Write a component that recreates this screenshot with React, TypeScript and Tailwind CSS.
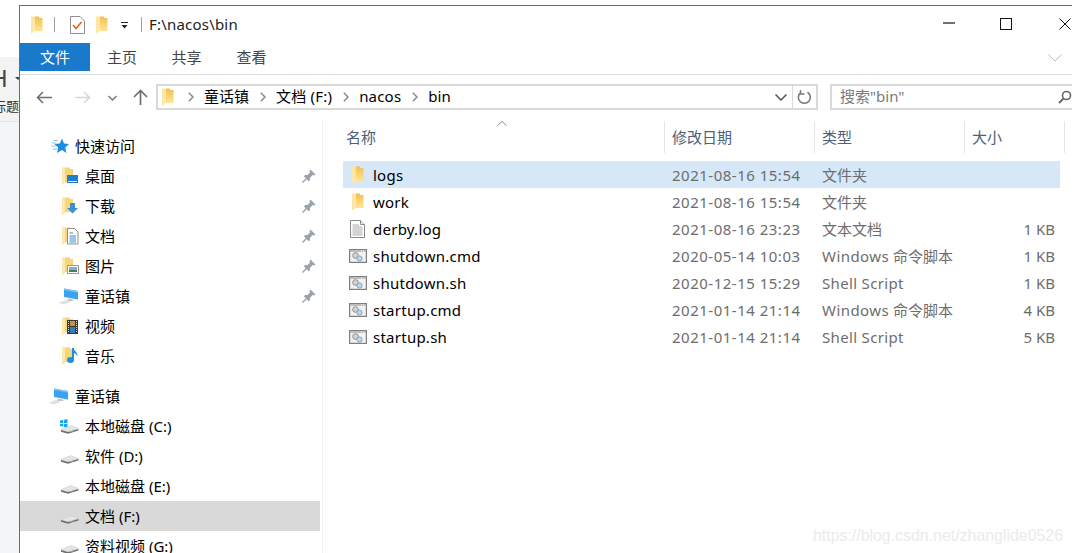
import type { ReactNode } from "react";

const uiFont = "font-['Noto_Sans','Noto_Sans_CJK_SC',sans-serif]";

function Folder({ className = "" }: { className?: string }) {
  return (
    <svg width="12" height="18" viewBox="0 0 12 18" className={className}>
      <defs>
        <linearGradient id="folderBody" x1="0" y1="0" x2="0" y2="1">
          <stop offset="0" stopColor="#f1c04f" />
          <stop offset="1" stopColor="#ffe595" />
        </linearGradient>
      </defs>
      <path d="M3.5 0.5 H8 V2 H11.5 V15 H3.5 Z" fill="url(#folderBody)" />
      <path d="M0 0.5 L3.5 0.5 V15 L0.6 17.5 H0 Z" fill="#fde6a6" />
    </svg>
  );
}

function Pin() {
  return (
    <svg width="14" height="14" viewBox="0 0 14 14">
      <path d="M8.5 0.5 L13.5 5.5 L12 6.5 L10.5 6 L8 9 L8 11.5 L6.5 12 L2 7.5 L3 6 L5.5 6 L8 3.5 L7.5 2 Z" fill="#9aa3ab" />
      <path d="M4.5 9.5 L0.5 13.5" stroke="#9aa3ab" strokeWidth="1.4" />
    </svg>
  );
}

function NavFolder({ children }: { children: ReactNode }) {
  return (
    <svg width="17" height="18" viewBox="0 0 17 18">
      <path d="M0 0.5 H8 V2 H11 V15 H3.5 L0.6 17.5 H0 Z" fill="#f8d675" />
      <path d="M0 0.5 L3 0.5 V15 L0.6 17.5 H0 Z" fill="#fde9ae" />
      {children}
    </svg>
  );
}

function DesktopIcon() {
  return (
    <NavFolder>
      <rect x="5" y="8" width="11" height="8" fill="#1a7fd0" />
      <rect x="6" y="14" width="9" height="1" fill="#d9ecfa" />
    </NavFolder>
  );
}
function DownloadIcon() {
  return (
    <NavFolder>
      <path d="M8 6 H13 V11 H16 L10.5 16.5 L5 11 H8 Z" fill="#3f8fd6" />
    </NavFolder>
  );
}
function DocsIcon() {
  return (
    <NavFolder>
      <path d="M5.5 1.5 H12.5 L16 5 V17 H5.5 Z" fill="#fff" stroke="#8d8d8d" />
      <path d="M7.5 6 H11 M7.5 9 H14 M7.5 11 H14 M7.5 13 H14 M7.5 15 H14" stroke="#3a8ad0" />
    </NavFolder>
  );
}
function PicturesIcon() {
  return (
    <NavFolder>
      <rect x="5.5" y="8.5" width="11" height="8" fill="#fff" stroke="#9a9a9a" />
      <rect x="7" y="10" width="8" height="3" fill="#7fb2d6" />
      <rect x="7" y="13" width="8" height="2" fill="#4d7a56" />
    </NavFolder>
  );
}
function VideoIcon() {
  return (
    <NavFolder>
      <rect x="5" y="3" width="11" height="14" fill="#3a3a3a" />
      <rect x="8" y="4" width="5" height="5" fill="#c9923f" />
      <rect x="8" y="10" width="5" height="6" fill="#3b78b8" />
      <path d="M6.5 4 V16 M14.5 4 V16" stroke="#d8d8d8" strokeDasharray="1 1" />
    </NavFolder>
  );
}
function MusicIcon() {
  return (
    <NavFolder>
      <path d="M11 1 V12" stroke="#1f8fe0" strokeWidth="2" />
      <path d="M11 1 C12 4 16 5 15.5 10 C15 7 13 6.5 11.5 6 Z" fill="#1f8fe0" />
      <ellipse cx="8.5" cy="13" rx="3.5" ry="3" fill="#1f8fe0" />
    </NavFolder>
  );
}

function Star() {
  return (
    <svg width="18" height="16" viewBox="0 0 18 16">
      <path d="M11 0.5 L13 5.5 L18 6 L14.2 9.5 L15.4 15 L11 12 L6 15 L7.2 9.5 L3.5 6 L8.8 5.5 Z" fill="#1c8be0" />
      <path d="M1 5 H5 M0 8 H5 M1.5 11 H6 M3 2.5 H7" stroke="#8cc5ef" />
    </svg>
  );
}

function Computer() {
  return (
    <svg width="21" height="17" viewBox="0 0 21 17">
      <path d="M6 0.5 L20 3 V11.5 L6 9 Z" fill="#3aa2ee" />
      <path d="M6 0.5 L20 3 V4.5 L6 2 Z" fill="#7fc7f6" />
      <path d="M14 11 L16 13 L9 13 L10 10.5 Z" fill="#c4c8cc" />
      <path d="M0.5 15 L7 12 L13 14 L6 16.5 Z" fill="#dfe2e5" />
    </svg>
  );
}

function Drive({ windows = false }: { windows?: boolean }) {
  return (
    <svg width="19" height="15" viewBox="0 0 19 15">
      {windows && <path d="M0 1.5 L3 1 V4 H0 Z M3.7 1 L7.5 0 V4 H3.7 Z M0 4.7 H3 V7.5 L0 7 Z M3.7 4.7 H7.5 V8.5 L3.7 8 Z" fill="#11a6ee" />}
      <path d="M1 10.5 L11 6.5 L18.5 9.5 L8 13 Z" fill="#e4e4e4" stroke="#c6c6c6" strokeWidth="0.5" />
      <path d="M1 11 L8 13 L18.5 10 V11.5 L8 14.8 L1 12.8 Z" fill="#6f6f6f" />
      <path d="M10 12.8 L14 11.7" stroke="#7bd07c" />
    </svg>
  );
}

function FileLog() {
  return (
    <svg width="15" height="18" viewBox="0 0 15 18">
      <path d="M0.5 0.5 H10.5 L14.5 4.5 V17.5 H0.5 Z" fill="#fff" stroke="#8a8a8a" />
      <path d="M10.5 0.5 V4.5 H14.5" fill="#eee" stroke="#8a8a8a" />
      <path d="M2.5 5 H9 M2.5 7 H12.5 M2.5 9 H12.5 M2.5 11 H12.5 M2.5 13 H12.5 M2.5 15 H12.5" stroke="#a9a9a9" />
    </svg>
  );
}

function FileScript() {
  return (
    <svg width="18" height="14" viewBox="0 0 18 14">
      <rect x="0.6" y="0.6" width="16.8" height="12.8" fill="#f2f2f2" stroke="#7f7f7f" strokeWidth="1.2" />
      <rect x="1" y="1" width="16" height="2" fill="#bdbdbd" />
      <path d="M12 2 H16" stroke="#f5f5f5" strokeDasharray="1 1" />
      <circle cx="6.5" cy="6.5" r="2.8" fill="#d4d4d4" stroke="#8f8f8f" />
      <circle cx="10.5" cy="9.5" r="2.6" fill="#bcd8ec" stroke="#7ea6c4" />
    </svg>
  );
}

function Crumb() {
  return (
    <svg width="6" height="10" viewBox="0 0 6 10" className="ml-[11px] mr-[10px] shrink-0">
      <path d="M0.8 0.8 L5 5 L0.8 9.2" fill="none" stroke="#8a8a8a" strokeWidth="1.5" />
    </svg>
  );
}

function NavRow({ icon, label, pin, selected, header }: { icon: ReactNode; label: string; pin?: boolean; selected?: boolean; header?: boolean }) {
  return (
    <div className={`flex h-[30px] shrink-0 items-center ${selected ? "bg-[#d9d9d9]" : ""}`}>
      <div className={`flex w-[55px] shrink-0 justify-end pr-[6px] ${header ? "" : "ml-[10px] pr-[5px]"}`}>{icon}</div>
      <span className="flex-1 text-[15px] leading-none text-black">{label}</span>
      {pin && <span className="mr-[4px]"><Pin /></span>}
    </div>
  );
}

function FileRow({ icon, name, date, type, size, selected }: { icon: ReactNode; name: string; date: string; type: ReactNode; size?: string; selected?: boolean }) {
  return (
    <div className={`flex h-[27px] w-[717px] items-center pt-[1px] text-[15px] leading-none text-[#6d6d6d] ${selected ? "bg-[#d6e8f8]" : ""}`}>
      <div className="flex w-[322px] items-center">
        <div className="flex w-[30px] justify-center pr-[1px]">{icon}</div>
        <span className="tracking-[0.25px] text-black">{name}</span>
      </div>
      <span className="w-[150px] pl-[7px] tracking-[0.5px]">{date}</span>
      <span className="w-[150px] pl-[7px]">{type}</span>
      <span className="w-[95px] pr-[5px] text-right">{size}</span>
    </div>
  );
}

function HeaderCell({ label, width, inset = "pl-[7px]" }: { label: string; width: string; inset?: string }) {
  return (
    <div className={`flex h-[32px] items-center border-r border-[#e5e5e5] text-[15px] leading-none text-[#4c607a] ${inset} ${width}`}>
      {label}
    </div>
  );
}

const windowsScript = (
  <>
    <span className="tracking-[0.45px]">Windows</span> 命令脚本
  </>
);
const shellScript = <span className="tracking-[0.33px]">Shell Script</span>;

export default function App() {
  return (
    <div className={`relative flex h-[553px] w-[1072px] overflow-hidden bg-white ${uiFont}`}>
      {/* document window behind the explorer */}
      <div className="flex w-[19px] shrink-0 flex-col overflow-hidden">
        <div className="h-[57px] bg-white" />
        <div className="flex h-[65px] flex-col border-b border-[#e3e3e3] bg-[#f3f3f3]">
          <div className="mt-[9px] flex h-[24px] items-center">
            <span className="-ml-[10px] text-[24px] leading-[24px] text-[#444]">H</span>
            <span className="ml-[7px] h-0 w-0 border-x-[3px] border-t-[3px] border-x-transparent border-t-[#444]" />
          </div>
          <span className="mt-[9px] -ml-[7px] whitespace-nowrap text-[13px] leading-[14px] text-[#333]">标题</span>
        </div>
        <div className="flex-1 bg-[#f4f5f7]" />
      </div>

      {/* explorer window */}
      <div className="flex min-w-0 flex-1 flex-col">
        <div className="mt-[5px] flex min-h-0 flex-1 flex-col border-t border-l border-[#2b7cc4]">
          <div className="flex h-[37px] shrink-0 items-center">
            <Folder className="ml-[11px]" />
            <span className="ml-[11px] h-[15px] w-px bg-[#a0a0a0]" />
            <svg width="15" height="18" viewBox="0 0 15 18" className="ml-[15px]">
              <path d="M0.5 0.5 H10 L14.5 5 V17.5 H0.5 Z" fill="#fff" stroke="#8f8f8f" />
              <path d="M3 9 L6 12.5 L11.5 6" fill="none" stroke="#e8602c" strokeWidth="1.6" />
            </svg>
            <Folder className="ml-[11px]" />
            <svg width="8" height="7" viewBox="0 0 8 7" className="ml-[13px] mt-[2px]">
              <path d="M0 0 H7 V1 H0 Z M0.5 3 H6.5 L3.5 6.5 Z" fill="#222" />
            </svg>
            <span className="ml-[12px] h-[15px] w-px bg-[#a0a0a0]" />
            <span className="ml-[7px] text-[15px] leading-none tracking-[0.2px] text-[#222]">F:\nacos\bin</span>
            <svg width="12" height="2" viewBox="0 0 12 2" className="mb-[3px] ml-auto">
              <path d="M0 1 H12" stroke="#111" strokeWidth="1.2" />
            </svg>
            <svg width="12" height="12" viewBox="0 0 12 12" className="mb-[2px] ml-[45px]">
              <rect x="0.5" y="0.5" width="11" height="11" fill="none" stroke="#111" />
            </svg>
            <svg width="12" height="12" viewBox="0 0 12 12" className="mb-[2px] ml-[47px] mr-[1px]">
              <path d="M0.5 0.5 L11.5 11.5 M11.5 0.5 L0.5 11.5" stroke="#111" />
            </svg>
          </div>

          <div className="flex h-[32px] shrink-0 items-start border-b border-[#dadbdc]">
            <div className="flex h-[28px] w-[70px] items-center justify-center bg-[#1979ca] text-[15px] leading-none text-white">文件</div>
            <div className="flex h-[28px] w-[64px] items-center justify-center text-[15px] leading-none text-[#444]">主页</div>
            <div className="flex h-[28px] w-[65px] items-center justify-center text-[15px] leading-none text-[#444]">共享</div>
            <div className="flex h-[28px] w-[65px] items-center justify-center text-[15px] leading-none text-[#444]">查看</div>
            <svg width="14" height="8" viewBox="0 0 14 8" className="ml-auto mr-[10px] mt-[11px]">
              <path d="M0.5 0.5 L7 7 L13.5 0.5" fill="none" stroke="#b9b9b9" />
            </svg>
          </div>

          <div className="flex h-[45px] shrink-0 items-center pb-[1px]">
            <svg width="16" height="13" viewBox="0 0 16 13" className="ml-[16px]">
              <path d="M16 6.5 H1.5 M7 1 L1.5 6.5 L7 12" fill="none" stroke="#6f6f6f" strokeWidth="1.5" />
            </svg>
            <svg width="16" height="13" viewBox="0 0 16 13" className="ml-[23px]">
              <path d="M0 6.5 H14.5 M9 1 L14.5 6.5 L9 12" fill="none" stroke="#d6d6d6" strokeWidth="1.5" />
            </svg>
            <svg width="9" height="6" viewBox="0 0 9 6" className="ml-[17px] mt-[2px]">
              <path d="M0.5 1 L4.5 5 L8.5 1" fill="none" stroke="#7a7a7a" strokeWidth="1.5" />
            </svg>
            <svg width="15" height="16" viewBox="0 0 15 16" className="ml-[16px]">
              <path d="M7.5 16 V1.5 M1 8 L7.5 1.5 L14 8" fill="none" stroke="#6f6f6f" strokeWidth="1.7" />
            </svg>
            <div className="ml-[8px] flex h-[26px] w-[662px] items-center border-2 border-[#d9d9d9] text-[15px] leading-none text-black">
              <Folder className="ml-[4px] mr-[3px]" />
              <Crumb />
              <span className="pb-[2px]">童话镇</span>
              <Crumb />
              <span className="pb-[2px] tracking-[0.2px]">文档 (F:)</span>
              <Crumb />
              <span className="pb-[2px] tracking-[0.2px]">nacos</span>
              <Crumb />
              <span className="pb-[2px]">bin</span>
              <svg width="12" height="7" viewBox="0 0 12 7" className="ml-auto mr-[5px]">
                <path d="M0.5 0.5 L6 6 L11.5 0.5" fill="none" stroke="#555" strokeWidth="1.5" />
              </svg>
              <div className="flex h-full w-[24px] items-center justify-center border-l border-[#d9d9d9]">
                <svg width="15" height="15" viewBox="0 0 15 15">
                  <path d="M10.5 2.2 A6 6 0 1 1 4 2.3" fill="none" stroke="#7a7a7a" strokeWidth="1.6" />
                  <path d="M3.5 0 V4 H7.5" fill="none" stroke="#7a7a7a" strokeWidth="1.4" />
                </svg>
              </div>
            </div>
            <div className="ml-[12px] flex h-[26px] flex-1 items-center border-y-2 border-l-2 border-[#d9d9d9] pl-[8px] text-[15px] leading-none text-[#7a7a7a]">
              <span className="pb-[1px]">搜索"bin"</span>
              <svg width="14" height="14" viewBox="0 0 14 14" className="ml-auto">
                <circle cx="8.5" cy="5.5" r="4" fill="none" stroke="#666" strokeWidth="1.6" />
                <path d="M5.5 8.5 L1 13" stroke="#666" strokeWidth="2" />
              </svg>
            </div>
          </div>

          <div className="flex min-h-0 flex-1">
            <nav className="flex w-[303px] shrink-0 flex-col overflow-hidden border-r border-[#f0f0f0] pt-[11px] pr-[2px]">
              <NavRow header icon={<Star />} label="快速访问" />
              <NavRow icon={<DesktopIcon />} label="桌面" pin />
              <NavRow icon={<DownloadIcon />} label="下载" pin />
              <NavRow icon={<DocsIcon />} label="文档" pin />
              <NavRow icon={<PicturesIcon />} label="图片" pin />
              <NavRow icon={<Computer />} label="童话镇" pin />
              <NavRow icon={<VideoIcon />} label="视频" />
              <NavRow icon={<MusicIcon />} label="音乐" />
              <div className="h-[10px] shrink-0" />
              <NavRow header icon={<Computer />} label="童话镇" />
              <NavRow icon={<Drive windows />} label="本地磁盘 (C:)" />
              <NavRow icon={<Drive />} label="软件 (D:)" />
              <NavRow icon={<Drive />} label="本地磁盘 (E:)" />
              <NavRow selected icon={<Drive />} label="文档 (F:)" />
              <NavRow icon={<Drive />} label="资料视频 (G:)" />
            </nav>

            <main className="flex min-w-0 flex-1 flex-col pt-[1px] pl-[20px]">
              <div className="relative flex">
                <svg width="10" height="5" viewBox="0 0 10 5" className="absolute top-0 left-[154px]">
                  <path d="M0.5 4.5 L5 0.5 L9.5 4.5" fill="none" stroke="#8a8a8a" />
                </svg>
                <HeaderCell label="名称" width="w-[322px]" inset="pl-[3px]" />
                <HeaderCell label="修改日期" width="w-[150px]" />
                <HeaderCell label="类型" width="w-[150px]" />
                <HeaderCell label="大小" width="w-[100px]" />
              </div>
              <div className="mt-[8px] flex flex-col">
                <FileRow selected icon={<Folder />} name="logs" date="2021-08-16 15:54" type="文件夹" />
                <FileRow icon={<Folder />} name="work" date="2021-08-16 15:54" type="文件夹" />
                <FileRow icon={<FileLog />} name="derby.log" date="2021-08-16 23:23" type="文本文档" size="1 KB" />
                <FileRow icon={<FileScript />} name="shutdown.cmd" date="2020-05-14 10:03" type={windowsScript} size="1 KB" />
                <FileRow icon={<FileScript />} name="shutdown.sh" date="2020-12-15 15:29" type={shellScript} size="1 KB" />
                <FileRow icon={<FileScript />} name="startup.cmd" date="2021-01-14 21:14" type={windowsScript} size="4 KB" />
                <FileRow icon={<FileScript />} name="startup.sh" date="2021-01-14 21:14" type={shellScript} size="5 KB" />
              </div>
            </main>
          </div>
        </div>
      </div>

      {/* blog watermark */}
      <span className="absolute right-[9px] bottom-[9px] font-['Liberation_Sans',sans-serif] text-[15.9px] leading-none text-[#ebebeb]">
        https://blog.csdn.net/zhanglide0526
      </span>
    </div>
  );
}
